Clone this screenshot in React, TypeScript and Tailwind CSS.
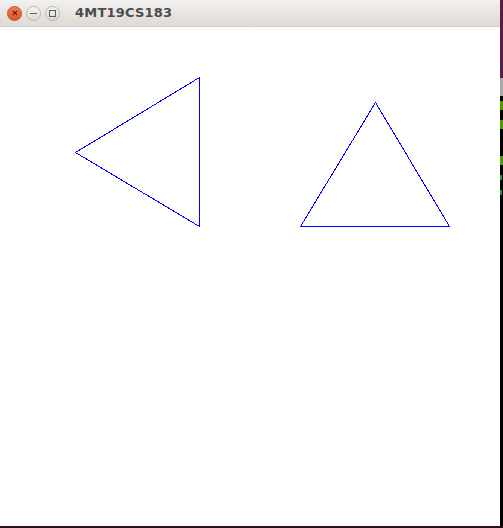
import React from 'react';

// Window chrome buttons (close / minimise / maximise)
const TitleButtons = () => (
  <div className="flex items-center gap-[4px] pl-[7px]">
    <div className="w-[15px] h-[15px] rounded-full bg-gradient-to-b from-[#f27a4f] to-[#df5428] border border-[#c8502c] flex items-center justify-center">
      <svg width="6" height="6" viewBox="0 0 6 6">
        <path d="M0.8 0.8 L5.2 5.2 M5.2 0.8 L0.8 5.2" stroke="#5a2210" strokeWidth="1.2" />
      </svg>
    </div>
    <div className="w-[15px] h-[15px] rounded-full bg-gradient-to-b from-[#f5f4f2] to-[#dcd8d3] border border-[#bab6b1] flex items-center justify-center">
      <div className="w-[7px] h-[1px] bg-[#5c5c5c]" />
    </div>
    <div className="w-[15px] h-[15px] rounded-full bg-gradient-to-b from-[#f5f4f2] to-[#dcd8d3] border border-[#bab6b1] flex items-center justify-center">
      <div className="w-[7px] h-[7px] border border-[#5c5c5c]" />
    </div>
  </div>
);

export default function App() {
  return (
    <div className="w-[503px] h-[528px] flex flex-col bg-[#2c0f24] overflow-hidden">
      <div className="flex flex-1">
        <div className="w-[500px] flex flex-col bg-white">
          {/* Title bar */}
          <div className="h-[27px] flex items-center bg-gradient-to-b from-[#f2f1ef] to-[#dedad5] border-b border-[#d2cdc8]">
            <TitleButtons />
            <span
              className="ml-[15px] text-[13px] font-bold text-[#4c4c4c] tracking-[0.2px]"
              style={{ fontFamily: '"DejaVu Sans", "Noto Sans", sans-serif' }}
            >
              4MT19CS183
            </span>
          </div>
          {/* Canvas */}
          <div className="flex-1">
            <svg width="500" height="499" viewBox="0 27 500 499" shapeRendering="crispEdges">
              <polygon points="75.5,152.5 199.5,77.5 199.5,226.5" fill="none" stroke="#0000ff" strokeWidth="1" />
              <polygon points="375.5,102.5 300.5,226.5 449.5,226.5" fill="none" stroke="#0000ff" strokeWidth="1" />
            </svg>
          </div>
        </div>
        {/* Desktop strip peeking on the right */}
        <div className="w-[3px] flex flex-col">
          <div className="h-[78px] bg-[#5a1d47]" />
          <div className="h-[18px] bg-[#a9a9a9]" />
          <div className="flex-1 bg-black flex flex-col gap-[10px] pt-[5px]">
            <div className="h-[9px] w-[3px] bg-[#4e9a06]" />
            <div className="h-[9px] w-[3px] bg-[#4e9a06]" />
            <div className="h-[9px] w-[3px] bg-[#4e9a06] mt-[17px]" />
            <div className="h-[5px] w-[2px] bg-[#16a016]" />
            <div className="h-[5px] w-[2px] bg-[#16a016]" />
          </div>
        </div>
      </div>
      <div className="h-[2px] bg-[#2c0f24]" />
    </div>
  );
}
